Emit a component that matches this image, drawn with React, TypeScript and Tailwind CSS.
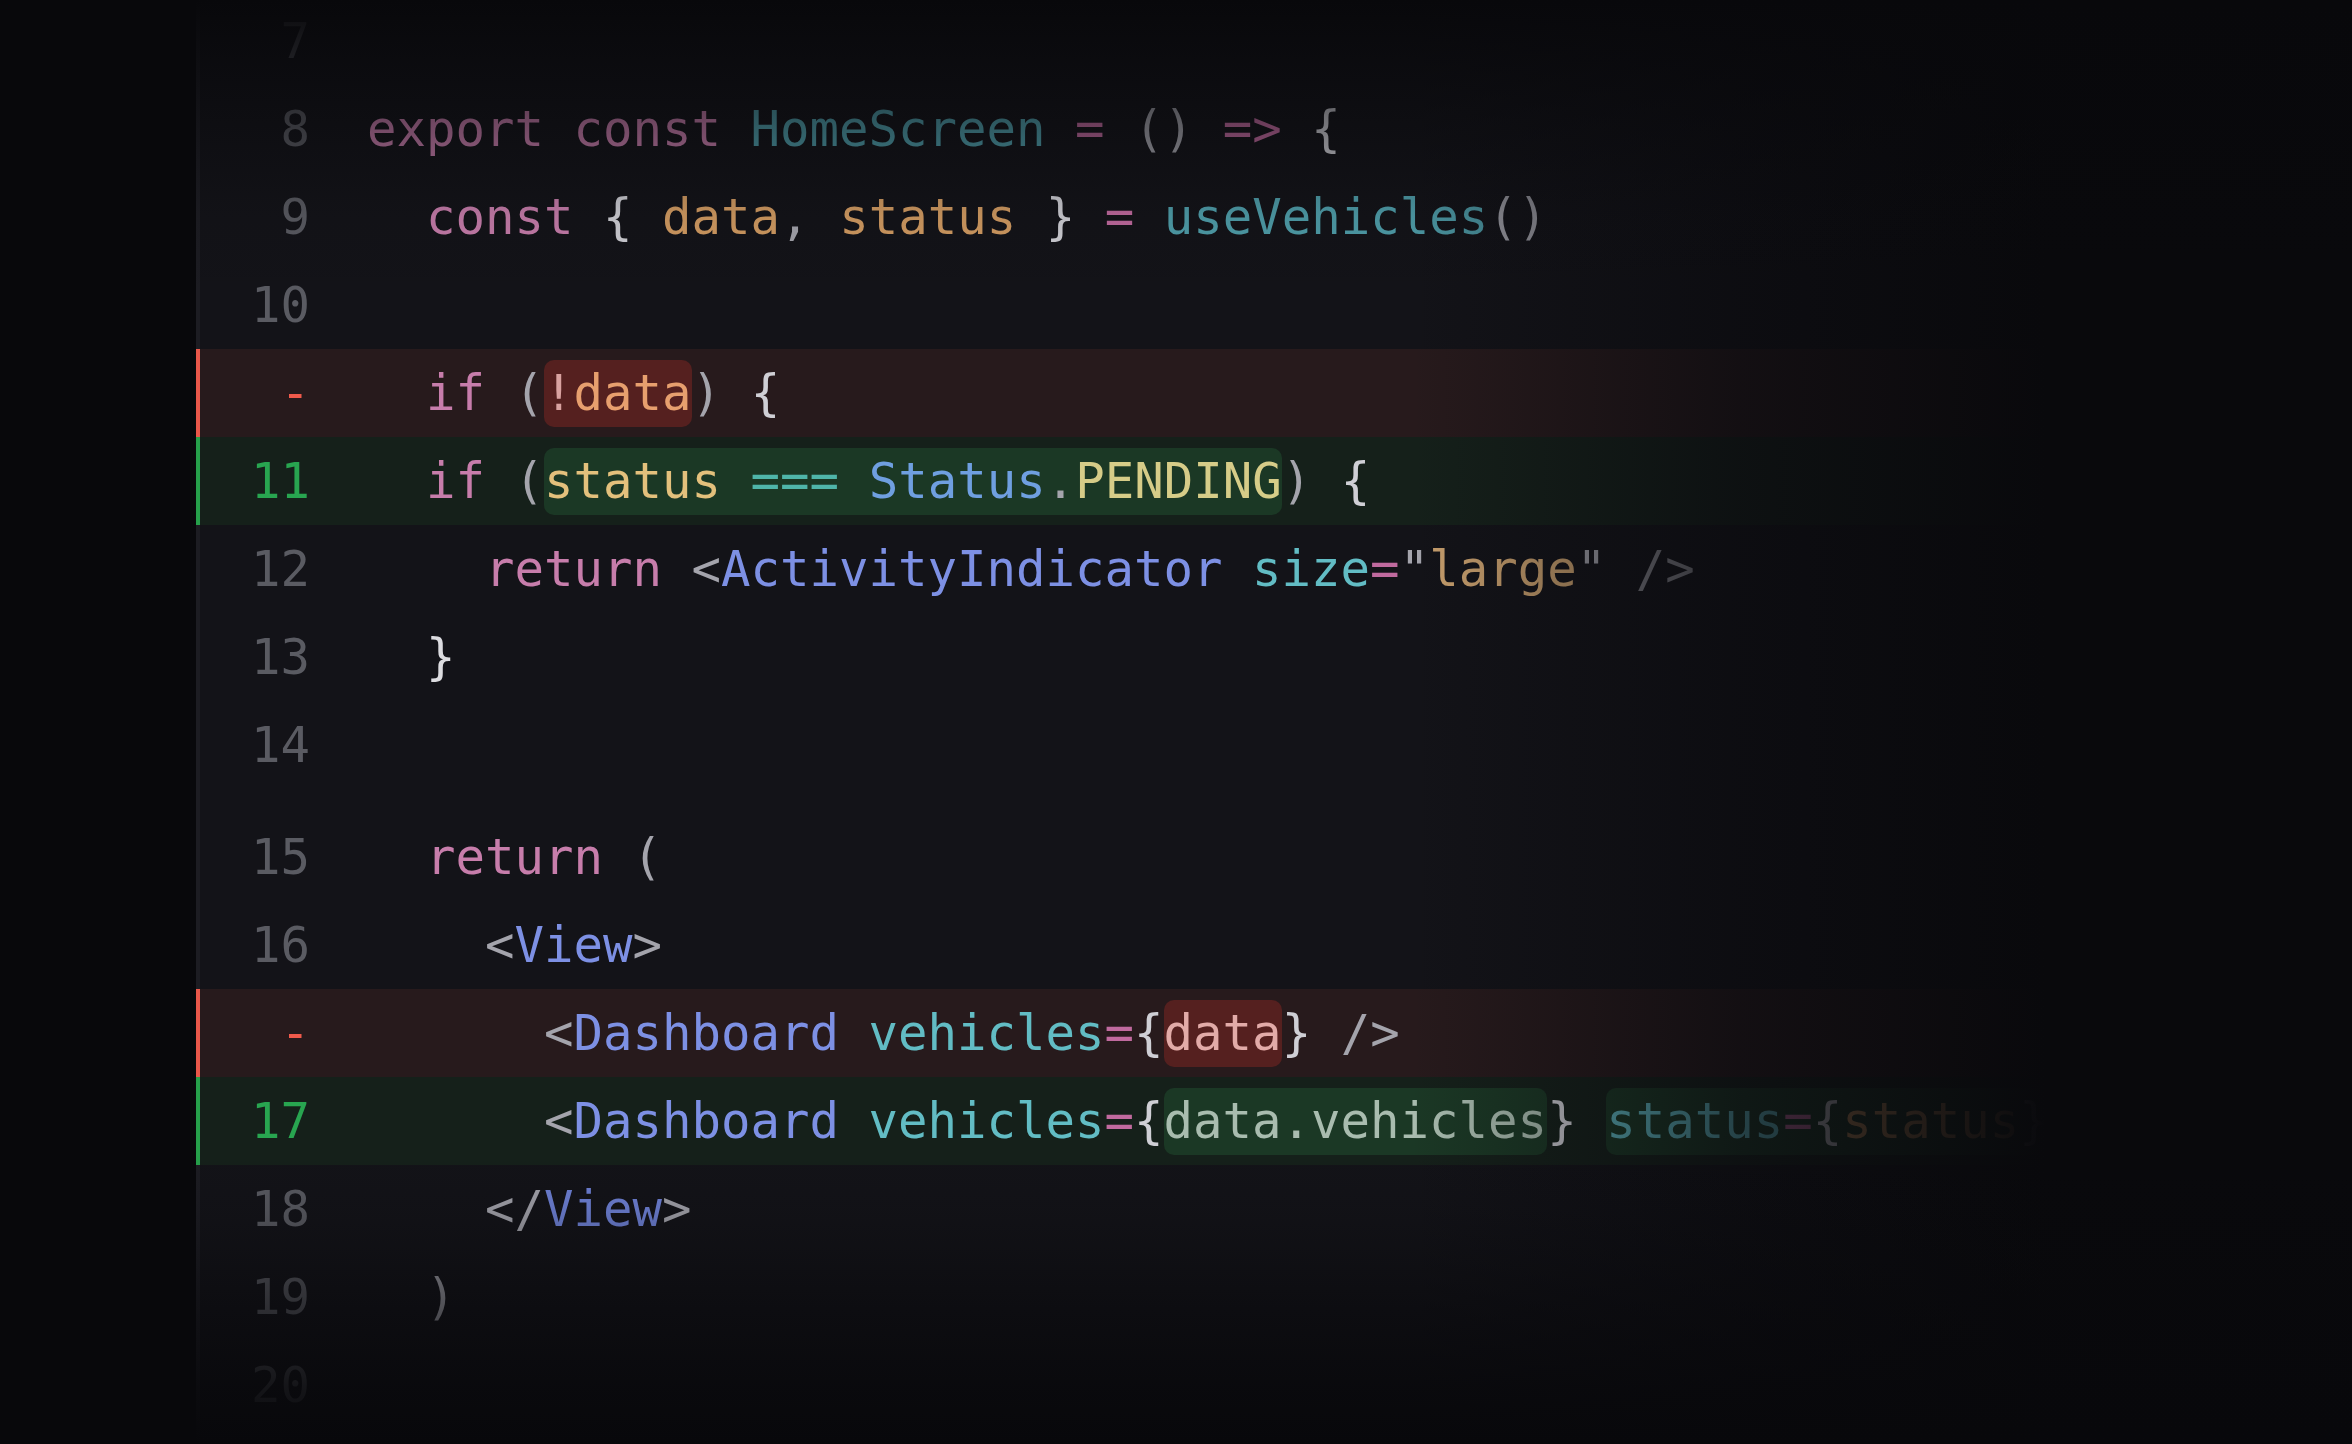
import React from "react";

type Box = "red" | "green";
type Tok = { t: string; c?: string; box?: Box; kids?: Tok[] };
type Line = { n: string; kind?: "del" | "add"; toks: Tok[]; gap?: boolean };

const kw = "text-[#c77dab]";
const pun = "text-[#a4a4ac]";
const br = "text-[#cfcfd5]";
const fn = "text-[#4f9eaa]";
const op = "text-[#c06a9e]";
const vr = "text-[#d39c62]";
const tag = "text-[#7d90e4]";
const attr = "text-[#62bcc4]";
const str = "text-[#c9a06e]";

const t = (text: string, c?: string): Tok => ({ t: text, c });
const box = (b: Box, kids: Tok[]): Tok => ({ t: "", box: b, kids });

const lines: Line[] = [
  { n: "7", toks: [] },
  {
    n: "8",
    toks: [
      t("export", kw), t(" "), t("const", kw), t(" "), t("HomeScreen", fn), t(" "),
      t("=", op), t(" "), t("()", pun), t(" "), t("=>", op), t(" "), t("{", br),
    ],
  },
  {
    n: "9",
    toks: [
      t("  "), t("const", kw), t(" "), t("{", br), t(" "), t("data", vr), t(",", pun), t(" "),
      t("status", vr), t(" "), t("}", br), t(" "), t("=", op), t(" "), t("useVehicles", fn), t("()", pun),
    ],
  },
  { n: "10", toks: [] },
  {
    n: "-",
    kind: "del",
    toks: [
      t("  "), t("if", kw), t(" "), t("(", pun),
      box("red", [t("!", "text-[#d9a2a0]"), t("data", "text-[#e79f6e]")]),
      t(")", pun), t(" "), t("{", br),
    ],
  },
  {
    n: "11",
    kind: "add",
    toks: [
      t("  "), t("if", kw), t(" "), t("(", pun),
      box("green", [
        t("status", "text-[#e3c07c]"), t(" "), t("===", "text-[#4fb5a9]"), t(" "),
        t("Status", "text-[#6f9fe0]"), t(".", pun), t("PENDING", "text-[#d6cc88]"),
      ]),
      t(")", pun), t(" "), t("{", br),
    ],
  },
  {
    n: "12",
    toks: [
      t("    "), t("return", kw), t(" "), t("<", pun), t("ActivityIndicator", tag), t(" "),
      t("size", attr), t("=", op), t('"', pun), t("large", str), t('"', pun), t(" "), t("/>", "text-[#85858c]"),
    ],
  },
  { n: "13", toks: [t("  "), t("}", "text-[#dcdce0]")] },
  { n: "14", toks: [] },
  { n: "15", gap: true, toks: [t("  "), t("return", kw), t(" "), t("(", pun)] },
  { n: "16", toks: [t("    "), t("<", pun), t("View", tag), t(">", pun)] },
  {
    n: "-",
    kind: "del",
    toks: [
      t("      "), t("<", pun), t("Dashboard", tag), t(" "), t("vehicles", attr), t("=", op), t("{", br),
      box("red", [t("data", "text-[#e2aba8]")]),
      t("}", br), t(" "), t("/>", "text-[#a4a4ac]"),
    ],
  },
  {
    n: "17",
    kind: "add",
    toks: [
      t("      "), t("<", pun), t("Dashboard", tag), t(" "), t("vehicles", attr), t("=", op), t("{", br),
      box("green", [t("data.vehicles", "text-[#a9bcaf]")]),
      t("}", br), t(" "),
      box("green", [t("status", attr), t("=", op), t("{", br), t("status", vr), t("}", br)]),
      t(" "), t("/>", pun),
    ],
  },
  { n: "18", toks: [t("    "), t("</", pun), t("View", "text-[#6f82d8]"), t(">", pun)] },
  { n: "19", toks: [t("  "), t(")", pun)] },
  { n: "20", toks: [] },
];

const renderTok = (tok: Tok, i: number) => {
  if (tok.box) {
    return (
      <span
        key={i}
        className={
          "flex h-[67px] items-center rounded-[10px] " +
          (tok.box === "red" ? "bg-[#55201f]" : "bg-[#1b3825]")
        }
      >
        {tok.kids!.map(renderTok)}
      </span>
    );
  }
  return (
    <span key={i} className={tok.c}>
      {tok.t}
    </span>
  );
};

const CodeRow = ({ line }: { line: Line }) => {
  const rowCls =
    line.kind === "del"
      ? "-ml-[4px] border-l-4 border-[#e9574a] bg-[#271a1c]"
      : line.kind === "add"
      ? "-ml-[4px] border-l-4 border-[#26a04b] bg-[#15201a]"
      : "";
  const numCls =
    line.kind === "del"
      ? "text-[#f05a4b]"
      : line.kind === "add"
      ? "text-[#28a550]"
      : "text-[#5a5b62]";
  return (
    <div className={"flex h-[88px] items-center " + rowCls + (line.gap ? " mt-[24px]" : "")}>
      <div className={"w-[110px] shrink-0 text-right " + numCls}>{line.n}</div>
      <div className="flex items-center whitespace-pre pl-[57px]">{line.toks.map(renderTok)}</div>
    </div>
  );
};

export default function App() {
  return (
    <div
      className="relative flex h-[1444px] w-[2352px] overflow-hidden bg-[#08080b] text-[49px] leading-none"
      style={{ fontFamily: '"DejaVu Sans Mono", "Liberation Mono", monospace' }}
    >
      <div className="w-[196px] shrink-0" />
      <div className="flex-1 border-l-4 border-[#1c1c22] bg-[#131318]">
        <div className="-mt-[3px] flex flex-col">
          {lines.map((l, i) => (
            <CodeRow key={i} line={l} />
          ))}
        </div>
      </div>

      {/* edge fades */}
      <div className="pointer-events-none absolute inset-0 bg-[linear-gradient(to_right,transparent_0%,transparent_60%,#0a0a0eb0_74%,#09090c_87%)]" />
      <div className="pointer-events-none absolute inset-x-0 top-0 h-[320px] bg-[linear-gradient(to_bottom,#08080b_0px,#08080bd0_40px,#08080b70_128px,#08080b18_216px,transparent_300px)]" />
      <div className="pointer-events-none absolute inset-x-0 bottom-0 h-[300px] bg-[linear-gradient(to_top,#08080b_0px,#08080bd8_56px,#08080b80_145px,#08080b20_234px,transparent_290px)]" />
    </div>
  );
}
